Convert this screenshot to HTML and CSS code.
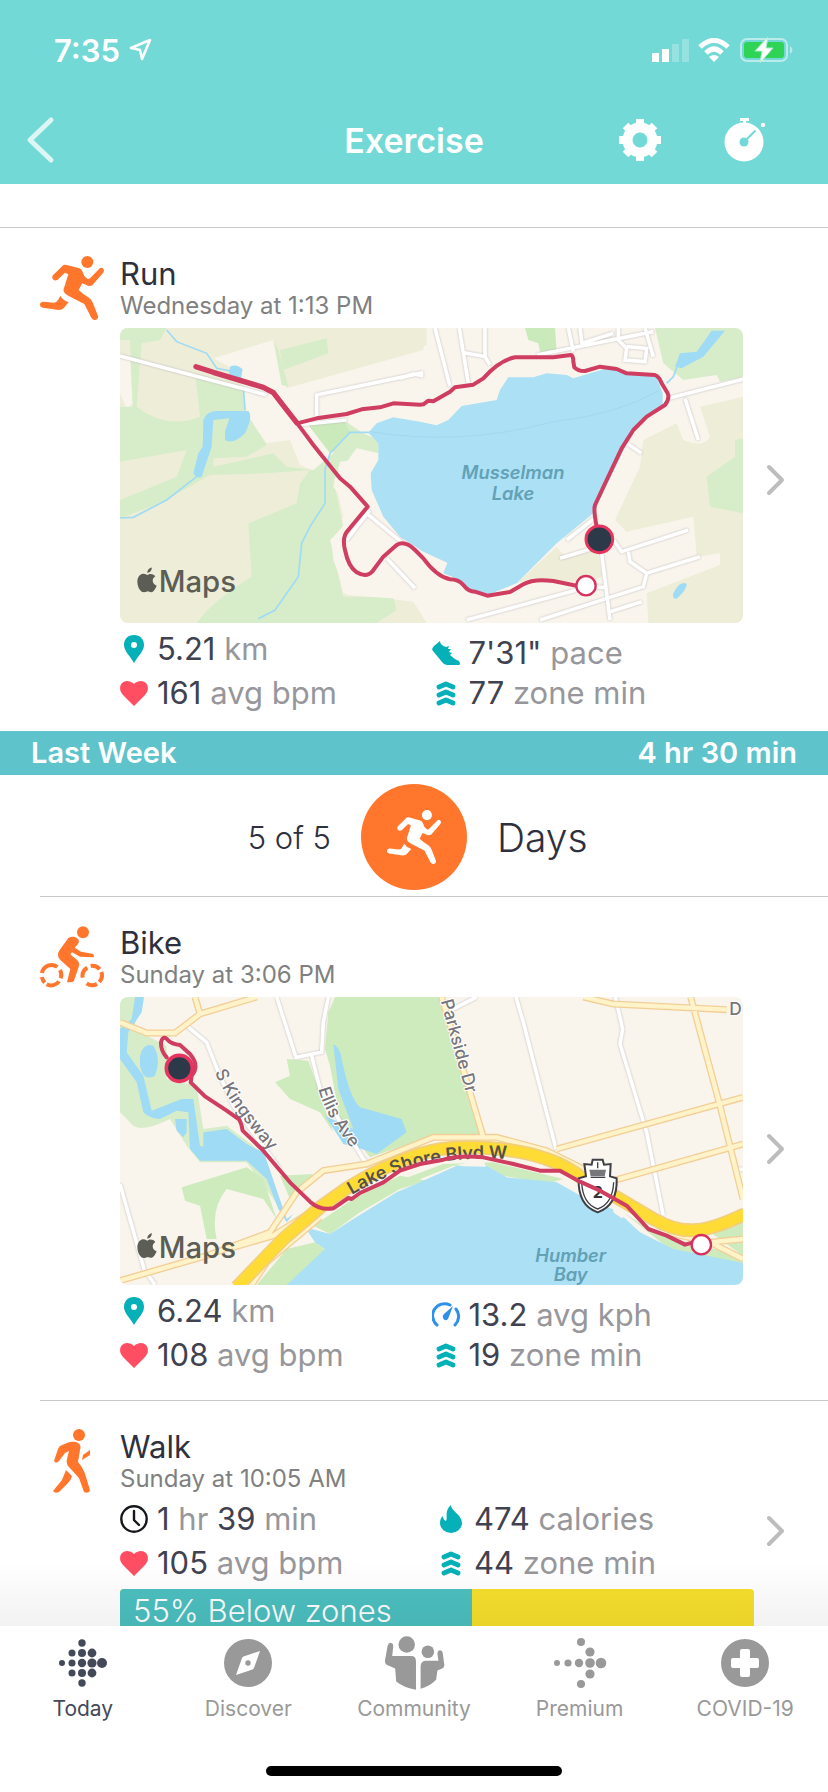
FILE: index.html
```html
<!DOCTYPE html>
<html lang="en">
<head>
	<meta charset="UTF-8">
	<meta name="viewport" content="width=device-width, initial-scale=1">
	<title>Exercise</title>
	<link rel="stylesheet" href="styles.css">
</head>
<body>
<!-- shared icons -->
<svg class="defs" aria-hidden="true">
	<symbol id="run" viewBox="120 48 192 192">
		<circle cx="262" cy="66" r="18"/>
		<path d="M190 75 Q194 73 200 75 L238 85 Q246 88 249 98 L256 116 Q244 132 236 150 Q248 162 268 174 Q276 180 279 190 L294 228 Q296 238 286 240 Q278 241 274 233 L253 192 L206 168 Q186 158 192 144 L205 103 L195 98 L172 120 Q163 124 158 117 Q155 111 159 106 Z"/>
		<path d="M238 96 L262 116 Q266 119 270 115 L298 86 Q304 80 310 86 Q314 92 309 99 L278 134 Q272 140 264 137 L240 127 Z"/>
		<path d="M130 185 L162 188 Q170 188 174 180 L181 168 Q190 182 206 187 L192 203 Q186 210 176 210 L128 203 Q119 201 120 193 Q121 185 130 185 Z"/>
	</symbol>
	<symbol id="bike" viewBox="120 78 192 192">
		<circle cx="249" cy="100" r="18"/>
		<path d="M205 117 Q222 108 234 120 Q240 128 232 137 L224 146 L243 158 L277 164 Q284 167 281 175 L240 173 L216 160 L211 166 L232 184 Q240 192 236 204 L222 245 Q218 252 201 249 L211 210 L181 183 Q168 169 179 153 Z"/>
		<g fill="none" stroke="currentColor" stroke-width="12">
			<path d="M172 204 A29 29 0 0 0 126 222 M126 234 A29 29 0 0 0 134 251 M140 256 A29 29 0 0 0 177 247 M182 238 A29 29 0 0 0 180 213"/>
			<path d="M248 236 A29 29 0 0 1 262 206 M272 201 A29 29 0 0 1 299 211 M304 219 A29 29 0 0 1 298 249 M291 255 A29 29 0 0 1 260 253"/>
		</g>
	</symbol>
	<symbol id="walk" viewBox="0 0 64 64">
		<circle cx="39" cy="6" r="6"/>
		<path d="M27 14 Q31 12 36 13 Q42 15 40 21 L38 33 Q44 40 46 48 L50 61 Q49 65 44 63 L39 49 L28 37 Q26 34 27 30 L29 22 L25 24 L19 32 Q16 35 14 32 L18 20 Q19 17 22 16 Z"/>
		<path d="M50 21 L50 26 L42 31 L43 26 Z"/>
		<path d="M26 41 L32 47 Q31 51 28 54 L19 63 Q15 65 13 62 L22 51 Z"/>
	</symbol>
	<symbol id="pin" viewBox="0 0 28 28">
		<path fill-rule="evenodd" d="M14 0 C20 0 24 4 24 10 C24 16 18 21 14 28 C10 21 4 16 4 10 C4 4 8 0 14 0 Z M14 7 A3 3 0 0 0 14 13 A3 3 0 0 0 14 7 Z"/>
	</symbol>
	<symbol id="heart" viewBox="0 0 28 28">
		<path d="M14 27 L3 16 C-5 7 5 -3 14 5 C23 -3 33 7 25 16 Z"/>
	</symbol>
	<symbol id="zone" viewBox="0 0 28 28">
		<path fill="none" stroke="currentColor" stroke-width="4.8" stroke-linecap="round" stroke-linejoin="round" d="M7 8 L14 5 L21 8 M7 16 L14 13 L21 16 M7 24 L14 21 L21 24"/>
	</symbol>
	<symbol id="shoe" viewBox="0 0 28 28">
		<path d="M8 2 Q8 6 14 8 L17 7 L16 10 L19 10 L17 13 L20 14 L18 16 Q22 20 27 22 Q29 25 27 26 L15 26 Q12 26 10 23 L1 12 Q-1 10 2 7 Z"/>
	</symbol>
	<symbol id="speed" viewBox="0 0 28 28">
		<path fill="none" stroke="currentColor" stroke-width="3" stroke-linecap="round" d="M5 24 A12 12 0 0 1 18 4 M24 8 A12 12 0 0 1 23 24"/>
		<path d="M21 5 L16 18 Q13 21 11 17 Q10 15 12 13 Z"/>
	</symbol>
	<symbol id="clock" viewBox="0 0 28 28">
		<circle cx="14" cy="14" r="12.7" fill="none" stroke="currentColor" stroke-width="2.4"/>
		<path fill="none" stroke="currentColor" stroke-width="2.4" stroke-linecap="round" d="M14 6 V15 L19 20"/>
	</symbol>
	<symbol id="flame" viewBox="0 0 28 28">
		<path d="M14 0 C14 6 25 10 25 18 A11 10 0 0 1 3 18 Q3 13 6 11 Q6 15 9 16 C11 13 7 6 14 0 Z"/>
	</symbol>
	<symbol id="apple" viewBox="0 0 62 76">
		<path d="M44 0 Q46 13 31 17 Q30 6 44 0 Z M31 23 C37 19 47 17 55 27 C43 35 45 50 59 55 C50 76 44 77 32 72 C18 78 12 74 5 62 C-3 44 1 21 18 19 Q24 19 31 23 Z"/>
	</symbol>
	<symbol id="chevron" viewBox="0 0 20 34">
		<path fill="none" stroke="currentColor" stroke-width="4" stroke-linecap="round" stroke-linejoin="round" d="M3 4 L16 17 L3 30"/>
	</symbol>
</svg>

<div class="app">
	<header class="header">
		<div class="status">
			<span class="time">7:35</span>
			<svg class="location" viewBox="0 0 24 24"><path fill="none" stroke="#fff" stroke-width="2.6" stroke-linejoin="round" d="M22 2 L14 21 L12 12 L3 10 Z"/></svg>
			<svg class="signal" viewBox="0 0 38 24">
				<path fill="#fff" d="M0 15h7v9H0z M10 11h7v13h-7z"/>
				<path fill="#fff" opacity=".25" d="M20 6h7v18h-7z M30 1h7v23h-7z"/>
			</svg>
			<svg class="wifi" viewBox="0 0 32 24">
				<path fill="none" stroke="#fff" stroke-width="5" d="M2 9 Q16 -4 30 9 M8 15 Q16 7 24 15"/>
				<path fill="#fff" d="M11 19 Q16 15 21 19 L16 24 Z"/>
			</svg>
			<svg class="battery" viewBox="0 0 54 26">
				<rect x="1" y="2" width="46" height="22" rx="6" fill="none" stroke="#fff" stroke-opacity=".5" stroke-width="2"/>
				<rect x="4" y="5" width="40" height="16" rx="3" fill="#2fd457"/>
				<path fill="#fff" fill-opacity=".5" d="M50 9 Q55 13 50 17 Z"/>
				<path fill="#fff" stroke="#a8eed0" d="M28 0 L15 14 H22 L20 26 L33 11 H26 Z"/>
			</svg>
		</div>
		<div class="nav">
			<button class="icon-btn back" aria-label="Back">
				<svg viewBox="0 0 30 48"><path fill="none" stroke="#fff" stroke-opacity=".75" stroke-width="5" stroke-linecap="round" stroke-linejoin="round" d="M25 4 L4 24 L25 44"/></svg>
			</button>
			<h1>Exercise</h1>
			<div class="actions">
				<button class="icon-btn" aria-label="Settings">
					<svg viewBox="0 0 44 44">
						<g fill="none" stroke="#fff">
							<circle cx="22" cy="22" r="12.5" stroke-width="10"/>
							<path stroke-width="8" stroke-linejoin="round" d="M22 1 V9 M22 35 V43 M1 22 H9 M35 22 H43 M7.5 7.5 L13 13 M31 31 L36.5 36.5 M36.5 7.5 L31 13 M13 31 L7.5 36.5"/>
						</g>
					</svg>
				</button>
				<button class="icon-btn" aria-label="Start timer">
					<svg viewBox="0 0 44 44">
						<path fill="#fff" d="M18 0h9v3h-3v4h-3V3h-3z"/>
						<circle cx="22" cy="24" r="19.5" fill="#fff"/>
						<circle cx="41" cy="7" r="2.2" fill="#fff"/>
						<circle cx="22" cy="24" r="4.5" fill="#72d9d7"/>
						<path stroke="#72d9d7" stroke-width="2" stroke-linecap="round" d="M22 24 L33 13"/>
					</svg>
				</button>
			</div>
		</div>
	</header>

	<main class="list">
		<a class="card card-route first" href="#run">
			<svg class="kind"><use href="#run"/></svg>
			<div class="body">
				<h2>Run</h2>
				<p class="when">Wednesday at 1:13 PM</p>
				<svg class="map" viewBox="360 264 1869 885">
					<rect x="360" y="264" width="1869" height="885" fill="#f9f5ed"/>
					<!-- fields -->
					<g fill="#eeedd8">
						<path d="M360 264 H1280 L1270 330 L860 445 L820 300 L640 355 L725 400 L735 520 L800 610 L870 600 L900 675 L935 690 L1000 700 L1030 830 L990 900 L1030 1060 L1240 1085 L1280 1149 H360 Z"/>
						<path d="M2229 470 L2100 500 L2130 590 Q2110 625 2050 600 L2030 550 L1930 600 L1920 680 L1845 840 L1880 875 L2080 830 L2090 950 L2160 940 L2160 975 L1940 1060 L1945 1149 H2229 Z"/>
						<path d="M1670 920 L1690 945 L1790 920 L1805 1010 L1760 1030 L1600 1015 L1550 1030 Z"/>
						<path d="M1200 264 H1280 V315 L1200 340 Z"/>
					</g>
					<path fill="#f9f5ed" d="M360 355 L390 360 L398 490 L380 508 L360 460 Z M820 930 L900 890 L895 970 L850 940 Z"/>
					<!-- woods -->
					<g fill="#d7edc9">
						<path d="M360 264 H500 L480 300 L425 310 L410 500 Q500 570 600 530 L585 400 L730 440 L740 520 L800 615 L740 650 L640 655 L640 680 L820 640 L860 680 L940 690 L1000 640 L985 545 L1030 540 L1090 580 L1135 600 V640 L1070 625 L1000 720 L1030 860 L990 900 L1030 1070 L1180 1070 L1190 1110 L1130 1149 H590 Q640 1080 755 1010 L745 850 L890 790 L900 730 L930 690 L800 700 L630 705 L480 790 L360 835 V780 L530 710 L560 630 L360 665 V500 L398 500 L390 300 L360 300 Z"/>
						<path d="M840 330 L980 295 L985 340 L850 390 Z M820 300 L835 330 L865 440 L845 435 Z"/>
						<path d="M1965 264 H2229 V410 L2160 425 L2150 405 L2050 420 L1990 370 Z"/>
						<path d="M2229 595 L2205 600 V650 L2120 710 L2130 800 L2229 820 Z"/>
					</g>
					<path fill="#f9f5ed" d="M1070 625 L1120 650 L1110 720 L1150 830 L1250 940 L1350 1020 L1480 1070 L1330 1149 H1290 L1240 1080 L1040 1065 L1000 960 L995 900 L1035 850 L1030 780 L1000 740 L1020 665 L1065 660 Z"/>
					<path fill="#cbeabb" d="M925 555 L1030 540 L1050 575 L990 640 Z M1575 264 H1665 L1670 335 H1620 L1615 310 L1585 300 Z"/>
					<!-- water -->
					<g fill="none" stroke="#a0dbf5" stroke-width="5">
						<path d="M500 270 L530 305 L620 340 L650 385 L700 395 M730 440 L735 510 M590 710 L500 780 L400 832 L360 834 M1110 577 H1050 L990 640 L975 690 V790 L930 860 L905 910 L895 1010 L825 1110 L775 1136"/>
						<path d="M2000 430 L2020 410 L2035 370"/>
					</g>
					<g fill="#a0dbf5">
						<path d="M690 380 Q710 370 728 388 L722 418 H685 Z M610 540 Q620 512 655 513 H745 Q760 530 735 580 Q700 615 675 600 V575 L688 535 L640 540 L635 620 L605 710 Q590 718 580 700 L595 640 L608 620 Z"/>
						<path d="M2040 340 L2090 335 L2135 272 H2175 L2110 350 L2045 385 L2025 380 Z M2020 1060 Q2040 1020 2060 1032 Q2060 1050 2030 1076 Q2016 1078 2020 1060 Z"/>
					</g>
					<path fill="#abe0f5" d="M1105 578 L1130 550 L1180 532 L1260 545 L1310 556 L1345 540 L1385 498 L1490 480 L1500 450 L1525 412 L1600 412 L1640 400 L1700 405 L1720 415 L1820 385 L1970 410 L1988 460 V495 L1900 570 L1780 820 L1670 910 L1550 1030 L1462 1065 L1405 1045 L1380 1020 L1330 1000 L1342 968 L1270 935 L1200 890 L1150 830 L1115 750 L1112 700 L1135 660 V610 Z"/>
					<path fill="none" stroke="#9fd3e8" stroke-width="2" d="M1110 575 Q1380 620 1660 545 Q1850 525 1980 450"/>
					<!-- streets -->
					<g class="street">
						<path d="M360 348 L800 465 M890 555 L1040 540 M950 530 V465 L1270 398 M1305 264 L1350 440 M1378 264 L1405 430 M1455 264 V350 L1390 338 M1455 350 L1470 375 M1200 415 L1240 402 L1270 408 M1610 345 L1960 275 M1705 264 L1720 335 M1740 264 L1746 310 L1840 280 M1855 264 V300 L1880 325 L1875 360 L1935 365 L1940 325 L1880 320 M1935 264 L1960 350"/>
						<path d="M2005 475 L2229 418 M2055 475 L2095 600 M1880 610 L1925 640 M1100 820 L1210 910 M1110 810 L1040 900 M1160 955 L1245 1045 M1680 955 L1780 925 M1790 830 L1700 900 M1840 900 L1865 935 L2065 870 M1885 935 L1890 965 L1940 1000 L2100 950 M1940 1000 L1930 1040 L1620 1140 M1805 940 L1830 1140 M1830 1115 L1925 1085 M1730 1050 L1400 1140 M1760 1040 L1815 1042"/>
					</g>
					<!-- track -->
					<g class="track">
						<path stroke-width="16" d="M588 380 L640 397 L700 415 L790 442 L820 458 L850 497 L890 548"/>
						<path d="M900 548 L950 535 L1040 522 L1085 508 L1140 502 L1180 490 L1260 494 L1270 493 L1285 482 L1300 484 L1350 455 L1365 442 L1420 434 L1450 415 Q1500 360 1545 352 L1660 352 L1712 345 Q1720 345 1720 365 L1723 382 Q1735 394 1755 393 L1800 380 L1850 387 L1880 400 L1965 405 Q1978 410 1985 430 L2003 460 Q2010 475 1995 495 L1940 530 L1900 570 L1865 625 L1820 720 L1785 795 Q1780 810 1790 860"/>
						<path d="M890 548 L940 615 L1000 690 L1020 715 L1050 740 L1103 800 L1045 870 Q1025 890 1035 930 Q1045 980 1070 997 Q1100 1015 1118 993 L1150 950 L1190 915 Q1215 900 1245 930 L1270 955 Q1310 1010 1350 1018 Q1375 1018 1390 1035 Q1405 1055 1425 1055 L1462 1067 L1530 1056 L1570 1033 Q1600 1015 1660 1023 L1730 1037"/>
					</g>
					<circle cx="1798" cy="898" r="40" fill="#2c3948" stroke="#e8335f" stroke-width="9"/>
					<circle cx="1758" cy="1037" r="29" fill="#fff" stroke="#d8315f" stroke-width="7"/>
					<text class="water-label" x="1539" y="718">Musselman</text>
					<text class="water-label" x="1539" y="780">Lake</text>
					<use class="brand" href="#apple" x="411" y="982" width="62" height="76"/>
					<text class="brand" x="476" y="1055">Maps</text>
				</svg>
				<div class="stats">
					<div class="col">
						<p><svg class="teal"><use href="#pin"/></svg><span><b>5.21</b> km</span></p>
						<p><svg class="red"><use href="#heart"/></svg><span><b>161</b> avg bpm</span></p>
					</div>
					<div class="col">
						<p><svg class="teal"><use href="#shoe"/></svg><span><b>7'31"</b> pace</span></p>
						<p><svg class="teal"><use href="#zone"/></svg><span><b>77</b> zone min</span></p>
					</div>
				</div>
			</div>
			<svg class="more"><use href="#chevron"/></svg>
		</a>

		<div class="week">
			<span>Last Week</span>
			<span>4 hr 30 min</span>
		</div>
		<div class="goal">
			<span class="count">5 of 5</span>
			<span class="badge"><svg><use href="#run"/></svg></span>
			<span class="unit">Days</span>
		</div>

		<a class="card card-route" href="#bike">
			<svg class="kind"><use href="#bike"/></svg>
			<div class="body">
				<h2>Bike</h2>
				<p class="when">Sunday at 3:06 PM</p>
				<svg class="map" viewBox="360 294 1869 864">
					<rect x="360" y="294" width="1869" height="864" fill="#f9f5ed"/>
					<!-- parks -->
					<g fill="#cdebbd">
						<path d="M1005 294 H1322 L1440 705 L1300 710 L1110 775 L1020 660 L990 500 L975 450 L985 340 Z"/>
						<path fill="#d7edc9" d="M360 294 H430 L400 390 L500 440 L500 540 L590 560 L610 690 L680 680 L760 740 L800 800 L860 960 L820 900 L740 790 L600 790 L560 740 L510 660 Q430 700 400 680 L360 640 Z"/>
						<path d="M545 865 L740 805 L790 840 L830 960 L790 900 L680 870 Q630 930 650 1020 L620 1020 L600 920 L555 905 Z M860 480 L925 485 L1000 700 L960 640 L870 600 L825 550 L870 530 Z M840 830 L940 825 L870 900 Z"/>
						<path d="M770 1158 L860 1050 L945 1030 L975 1050 L900 1158 Z M940 980 L1060 900 L1200 830 L1280 845 L1200 870 L1080 940 L990 1005 Z M1210 840 L1330 795 L1480 790 L1690 840 L1640 855 L1510 830 L1460 800 L1360 800 L1210 860 Z M1870 940 L1960 1000 L2100 1040 L2229 1070 V1110 L2020 1060 Z M2130 1000 L2229 960 V1070 Z"/>
					</g>
					<!-- water -->
					<g fill="#a0dbf5">
						<path d="M405 294 H432 L425 340 L385 400 L380 460 L430 530 L455 635 L545 600 H580 L590 670 L600 740 Q680 770 790 755 L860 960 L880 945 L860 970 L835 930 L800 840 L740 785 L600 785 L570 750 L565 640 L530 635 L480 660 Q450 660 430 640 L410 550 L360 480 V390 L395 360 Z"/>
						<path d="M420 470 Q430 430 460 440 Q485 480 465 530 Q430 550 420 500 Z M525 660 H560 V700 L550 715 L530 695 Z M610 700 L680 690 L740 735 L790 760 L720 785 L610 770 Z"/>
						<path d="M1000 435 Q1020 445 1025 480 Q1050 600 1080 625 L1205 660 L1220 700 L1130 765 L1085 750 L1030 735 L975 650 L1060 690 L1015 570 Z"/>
					</g>
					<path fill="#abe0f5" d="M860 1158 L975 1050 L945 1030 L915 985 L990 1005 L1060 960 L1190 880 L1270 845 L1370 800 L1460 800 L1520 835 L1670 850 L1750 895 L1850 935 L1920 1000 L2020 1050 L2229 1092 V1158 Z"/>
					<path fill="#f9f5ed" d="M1370 797 L1450 783 L1458 803 L1390 802 Z M1680 850 L1720 840 L1750 895 Z M1840 920 L1880 950 L1865 958 L1840 940 Z"/>
					<!-- streets -->
					<g class="street">
						<path d="M360 855 L432 1110 L465 1158 M560 380 L620 430 L655 520 L700 620 L840 810 M830 294 L888 475 L965 460 L970 370 L985 294 M935 470 L960 570 L1090 780 L1110 800 M1350 335 L1430 294 M1548 294 L1570 370 L1668 750 M1846 294 L1868 390 L1860 435 L1940 700 L1990 950 M2229 810 L2215 812"/>
					</g>
					<g class="road-edge">
						<path d="M360 370 L440 402 H525 L600 345 L770 294 M600 345 L585 294 M360 1145 L620 1070 L810 1000 L890 880 L970 815 L1100 795 L1300 715 H1490 L1640 755 L1750 810 M1325 294 L1450 715 M1750 294 L1840 315 L2180 332 M2072 294 L2160 620 L2229 900 M1670 750 L2229 595 M1840 845 L2229 735 M700 1045 L820 1010 L930 940 M2130 1030 L2229 1020 M2000 1000 L2130 1030 L2229 1080 M755 1158 L800 1090 L960 955"/>
					</g>
					<g class="road">
						<path d="M360 370 L440 402 H525 L600 345 L770 294 M600 345 L585 294 M360 1145 L620 1070 L810 1000 L890 880 L970 815 L1100 795 L1300 715 H1490 L1640 755 L1750 810 M1325 294 L1450 715 M1750 294 L1840 315 L2180 332 M2072 294 L2160 620 L2229 900 M1670 750 L2229 595 M1840 845 L2229 735 M700 1045 L820 1010 L930 940 M2130 1030 L2229 1020 M2000 1000 L2130 1030 L2229 1080 M755 1158 L800 1090 L960 955"/>
					</g>
					<path class="highway-edge" d="M710 1165 L850 1020 L960 925 L1040 868 Q1150 800 1260 765 Q1330 742 1420 745 Q1560 750 1640 780 Q1700 800 1750 840 L1850 895 L1960 960 Q2030 1000 2090 993 Q2140 990 2235 945"/>
					<path class="highway" d="M710 1165 L850 1020 L960 925 L1040 868 Q1150 800 1260 765 Q1330 742 1420 745 Q1560 750 1640 780 Q1700 800 1750 840 L1850 895 L1960 960 Q2030 1000 2090 993 Q2140 990 2235 945"/>
					<!-- street names -->
					<path id="lakeshore" fill="none" d="M1055 888 Q1180 815 1270 798 Q1400 770 1580 782"/>
					<path id="kingsway" fill="none" d="M645 520 Q690 630 850 800"/>
					<path id="ellis" fill="none" d="M955 570 Q980 665 1090 790"/>
					<path id="parkside" fill="none" d="M1322 306 L1410 628"/>
					<text class="street-label"><textPath href="#kingsway">S Kingsway</textPath></text>
					<text class="street-label"><textPath href="#ellis">Ellis Ave</textPath></text>
					<text class="street-label"><textPath href="#parkside">Parkside Dr</textPath></text>
					<text class="street-label dark"><textPath href="#lakeshore">Lake Shore Blvd W</textPath></text>
					<text class="street-label" x="2188" y="348">D</text>
					<!-- highway shield -->
					<path fill="#fff" stroke="#3f3f45" stroke-width="6" d="M1778 782 H1808 L1812 797 L1832 795 L1830 832 L1850 838 Q1853 920 1793 940 Q1733 920 1736 838 L1758 832 L1753 795 L1775 797 Z"/>
					<path fill="none" stroke="#3f3f45" stroke-width="4" d="M1745 850 Q1748 915 1793 930 Q1838 915 1841 850 M1772 835 H1816 M1793 790 V808"/>
					<path fill="#77777b" d="M1768 812 H1818 L1814 832 H1772 Z"/>
					<text class="shield" x="1793" y="896">2</text>
					<!-- track -->
					<g class="track">
						<path d="M500 475 Q482 455 483 430 Q490 405 505 425 Q515 435 540 438 L570 465 Q600 500 575 530 L572 550 L615 592 L680 635 L718 662 Q725 675 728 695 L790 755 L870 850 L930 908 Q960 935 1000 928 L1045 897 L1055 900 L1080 882 L1150 850 L1200 815 L1260 795 L1330 782 Q1380 768 1450 775 L1540 795 L1620 815 L1680 815 L1740 848 L1800 875 L1880 920 L1945 990 L2000 1010 L2055 1037 L2080 1030"/>
					</g>
					<circle cx="538" cy="508" r="39" fill="#2c3948" stroke="#e8335f" stroke-width="11"/>
					<circle cx="2104" cy="1037" r="29" fill="#fff" stroke="#d8315f" stroke-width="7"/>
					<text class="water-label" x="1712" y="1090">Humber</text>
					<text class="water-label" x="1712" y="1146">Bay</text>
					<use class="brand" href="#apple" x="411" y="1002" width="62" height="76"/>
					<text class="brand" x="476" y="1076">Maps</text>
				</svg>
				<div class="stats">
					<div class="col">
						<p><svg class="teal"><use href="#pin"/></svg><span><b>6.24</b> km</span></p>
						<p><svg class="red"><use href="#heart"/></svg><span><b>108</b> avg bpm</span></p>
					</div>
					<div class="col">
						<p><svg class="blue"><use href="#speed"/></svg><span><b>13.2</b> avg kph</span></p>
						<p><svg class="teal"><use href="#zone"/></svg><span><b>19</b> zone min</span></p>
					</div>
				</div>
			</div>
			<svg class="more"><use href="#chevron"/></svg>
		</a>

		<a class="card card-plain" href="#walk">
			<svg class="kind"><use href="#walk"/></svg>
			<div class="body">
				<h2>Walk</h2>
				<p class="when">Sunday at 10:05 AM</p>
				<div class="stats">
					<div class="col">
						<p><svg><use href="#clock"/></svg><span><b>1</b> hr <b>39</b> min</span></p>
						<p><svg class="red"><use href="#heart"/></svg><span><b>105</b> avg bpm</span></p>
					</div>
					<div class="col">
						<p><svg class="teal"><use href="#flame"/></svg><span><b>474</b> calories</span></p>
						<p><svg class="teal"><use href="#zone"/></svg><span><b>44</b> zone min</span></p>
					</div>
				</div>
				<div class="zones">
					<div class="below" style="width: 55.5%">55% Below zones</div>
				</div>
			</div>
			<svg class="more"><use href="#chevron"/></svg>
		</a>
	</main>

	<footer class="footer">
		<nav class="tabs">
			<a class="tab selected" href="#today">
				<svg viewBox="0 0 54 54">
					<circle cx="6" cy="27" r="3"/>
					<circle cx="16" cy="17" r="3.5"/><circle cx="16" cy="27" r="3.5"/><circle cx="16" cy="37" r="3.5"/>
					<circle cx="26" cy="7" r="3.7"/><circle cx="26" cy="17" r="4"/><circle cx="26" cy="27" r="4.2"/><circle cx="26" cy="37" r="4"/><circle cx="26" cy="47" r="3.7"/>
					<circle cx="36" cy="17" r="4.4"/><circle cx="36" cy="27" r="4.6"/><circle cx="36" cy="37" r="4.4"/>
					<circle cx="46" cy="27" r="5"/>
				</svg>
				Today
			</a>
			<a class="tab" href="#discover">
				<svg viewBox="0 0 54 54">
					<circle cx="27" cy="27" r="24"/>
					<path fill="#fff" d="M39 15 L33 32 Q32 34 30 34 L15 39 L21 22 Q22 20 24 20 Z"/>
					<circle cx="27" cy="27" r="2.7"/>
				</svg>
				Discover
			</a>
			<a class="tab" href="#community">
				<svg class="wide" viewBox="1140 108 194 162">
					<circle cx="1215" cy="133" r="25"/>
					<circle cx="1279" cy="155" r="19"/>
					<path d="M1157 137 Q1160 127 1168 128 Q1175 130 1174 140 L1171 168 H1228 Q1243 168 1243 184 V270 Q1208 265 1183 245 L1180 206 L1154 194 Q1148 190 1149 182 Z"/>
					<path d="M1257 200 Q1257 182 1275 182 H1311 L1308 160 Q1309 150 1316 150 Q1323 150 1324 158 L1329 195 Q1329 202 1324 205 L1308 212 L1304 240 Q1285 260 1257 267 Z"/>
				</svg>
				Community
			</a>
			<a class="tab" href="#premium">
				<svg viewBox="0 0 54 54">
					<circle cx="4" cy="27" r="3"/><circle cx="15" cy="27" r="3.6"/><circle cx="26" cy="27" r="4.2"/><circle cx="37" cy="27" r="4.8"/><circle cx="48" cy="27" r="5.3"/>
					<circle cx="28" cy="6" r="4"/><circle cx="37" cy="16" r="4.6"/><circle cx="37" cy="38" r="4.6"/><circle cx="28" cy="48" r="4"/>
				</svg>
				Premium
			</a>
			<a class="tab" href="#covid">
				<svg viewBox="0 0 54 54">
					<circle cx="27" cy="27" r="24"/>
					<path fill="#fff" d="M24 13h6q2 0 2 2v7h7q2 0 2 2v6q0 2-2 2h-7v7q0 2-2 2h-6q-2 0-2-2v-7h-7q-2 0-2-2v-6q0-2 2-2h7v-7q0-2 2-2z"/>
				</svg>
				COVID-19
			</a>
		</nav>
		<div class="home"></div>
	</footer>
</div>
</body>
</html>
```

FILE: styles.css
```css
* {
	margin: 0;
	padding: 0;
	box-sizing: border-box;
}

body {
	font-family: Inter, "Liberation Sans", sans-serif;
	color: #2e303d;
	background: #fff;
}

a {
	color: inherit;
	text-decoration: none;
}

svg {
	display: block;
	flex: none;
	fill: currentColor;
}

.defs {
	position: absolute;
	width: 0;
	height: 0;
}

.app {
	display: flex;
	flex-direction: column;
	height: 100vh;
}

/* header */
.header {
	flex: none;
	background: #72d9d7;
	color: #fff;
}

.status {
	display: flex;
	align-items: center;
	height: 96px;
	padding: 4px 34px 0 54px;
}

.time {
	font-size: 31px;
	font-weight: 600;
}

.location {
	width: 24px;
	height: 24px;
	margin-left: 8px;
}

.signal {
	width: 38px;
	height: 24px;
	margin-left: auto;
}

.wifi {
	width: 32px;
	height: 24px;
	margin: 0 10px 0 8px;
}

.battery {
	width: 54px;
	height: 26px;
}

.nav {
	display: grid;
	grid-template-columns: 1fr auto 1fr;
	align-items: center;
	height: 88px;
	padding: 0 62px 0 26px;
}

.nav h1 {
	font-size: 34px;
	font-weight: 600;
	margin-left: 36px;
}

.actions {
	display: flex;
	justify-content: flex-end;
	gap: 60px;
}

.icon-btn {
	border: none;
	background: none;
	cursor: pointer;
}

.icon-btn svg {
	width: 44px;
	height: 44px;
}

.back svg {
	width: 30px;
	height: 48px;
}

/* exercise list */
.list {
	flex: 1;
	min-height: 0;
	padding-top: 43px;
	overflow-y: auto;
	scrollbar-width: none;
}

.card {
	position: relative;
	display: grid;
	grid-template-columns: 80px 1fr 74px;
	align-items: start;
	margin-left: 40px;
	padding: 28px 0 18px;
	border-top: 1px solid #c8c8ca;
}

.card-route {
	min-height: 504px;
}

.card.first {
	margin-left: 0;
	padding-left: 40px;
}

.card-plain {
	padding-bottom: 30px;
}

.card-route .body {
	padding-right: 11px;
}

.kind {
	width: 64px;
	height: 64px;
	color: #ff762c;
}

.card h2 {
	font-size: 31px;
	line-height: 36px;
	font-weight: 400;
}

.when {
	font-size: 24px;
	line-height: 28px;
	color: #808080;
}

.map {
	width: 100%;
	margin-top: 8px;
	border-radius: 8px;
}

.more {
	width: 20px;
	height: 34px;
	margin-left: 12px;
	align-self: center;
	color: #bdbdbf;
}

/* the chevron centres on the whole card, so pull it out of the padding */
.card-route .more {
	margin-top: -10px;
}

.stats {
	display: grid;
	grid-template-columns: 1fr 1fr;
	margin-top: 6px;
}

.col {
	display: flex;
	flex-direction: column;
	justify-content: flex-end;
	gap: 4px;
}

.card-route .col + .col {
	gap: 0;
}

.col p {
	display: flex;
	align-items: center;
	gap: 9px;
	font-size: 31px;
	line-height: 40px;
	color: #97979b;
	white-space: nowrap;
}

.col b {
	font-weight: 400;
	color: #40424f;
}

.col svg {
	width: 28px;
	height: 28px;
	color: #15171c;
}

.col svg.teal {
	color: #05b0b8;
}

.col svg.red {
	color: #ff4e62;
}

.col svg.blue {
	color: #2e90e8;
}

.zones {
	height: 44px;
	margin-top: 6px;
	border-radius: 4px;
	overflow: hidden;
	background: #f6df2c;
}

.below {
	padding-left: 13px;
	background: #4cbfbf;
	color: #fff;
	font-size: 31px;
	line-height: 44px;
	font-weight: 300;
}

/* week summary */
.week {
	display: flex;
	justify-content: space-between;
	padding: 0 31px;
	background: #5fc3cb;
	color: #fff;
	font-size: 29px;
	line-height: 44px;
	font-weight: 600;
}

.goal {
	display: grid;
	grid-template-columns: 1fr auto 1fr;
	align-items: center;
	gap: 30px;
	padding: 9px 0 6px;
	font-weight: 300;
}

.count {
	font-size: 31px;
	text-align: right;
}

.unit {
	font-size: 39px;
}

.badge {
	display: flex;
	align-items: center;
	justify-content: center;
	width: 106px;
	height: 106px;
	border-radius: 50%;
	background: #ff762c;
	color: #fff;
}

.badge svg {
	width: 54px;
	height: 54px;
}

/* maps, drawn at three units per pixel */
.street {
	fill: none;
	stroke: #fff;
	stroke-width: 11;
	filter: drop-shadow(0 0 3px #bdb8ba);
}

.road-edge {
	fill: none;
	stroke: #f3cf98;
	stroke-width: 21;
}

.road {
	fill: none;
	stroke: #fff3c9;
	stroke-width: 13;
}

.highway-edge {
	fill: none;
	stroke: #f2cf7c;
	stroke-width: 42;
}

.highway {
	fill: none;
	stroke: #ffdb35;
	stroke-width: 32;
}

.track {
	fill: none;
	stroke: #cf3d60;
	stroke-width: 12;
	stroke-linecap: round;
	stroke-linejoin: round;
}

.map text {
	font-size: 55px;
}

.map .water-label {
	font-style: italic;
	font-weight: 600;
	text-anchor: middle;
	fill: #62a1b6;
}

.map .street-label {
	font-size: 52px;
	font-weight: 500;
	fill: #77757b;
	stroke: #fff;
	stroke-width: 6;
	paint-order: stroke;
}

.map .dark {
	font-size: 54px;
	font-weight: 600;
	fill: #55504a;
	stroke: none;
}

.map .shield {
	font-size: 48px;
	font-weight: 700;
	text-anchor: middle;
	fill: #333;
}

.map .brand {
	font-size: 88px;
	font-weight: 500;
	fill: #5c5d55;
}

/* bottom tabs */
.footer {
	position: relative;
	flex: none;
	background: #fff;
}

.footer::before {
	content: "";
	position: absolute;
	left: 0;
	right: 0;
	bottom: 100%;
	height: 64px;
	background: linear-gradient(rgba(0, 0, 0, 0), rgba(0, 0, 0, .05));
	pointer-events: none;
}

.tabs {
	display: grid;
	grid-template-columns: repeat(5, 1fr);
	padding-top: 10px;
}

.tab {
	display: flex;
	flex-direction: column;
	align-items: center;
	gap: 6px;
	font-size: 21px;
	line-height: 26px;
	color: #999;
}

.tab svg {
	width: 54px;
	height: 54px;
}

.tab .wide {
	width: 64px;
}

.selected {
	color: #44495a;
}

.home {
	width: 296px;
	height: 10px;
	margin: 44px auto 16px;
	border-radius: 5px;
	background: #000;
}
```
